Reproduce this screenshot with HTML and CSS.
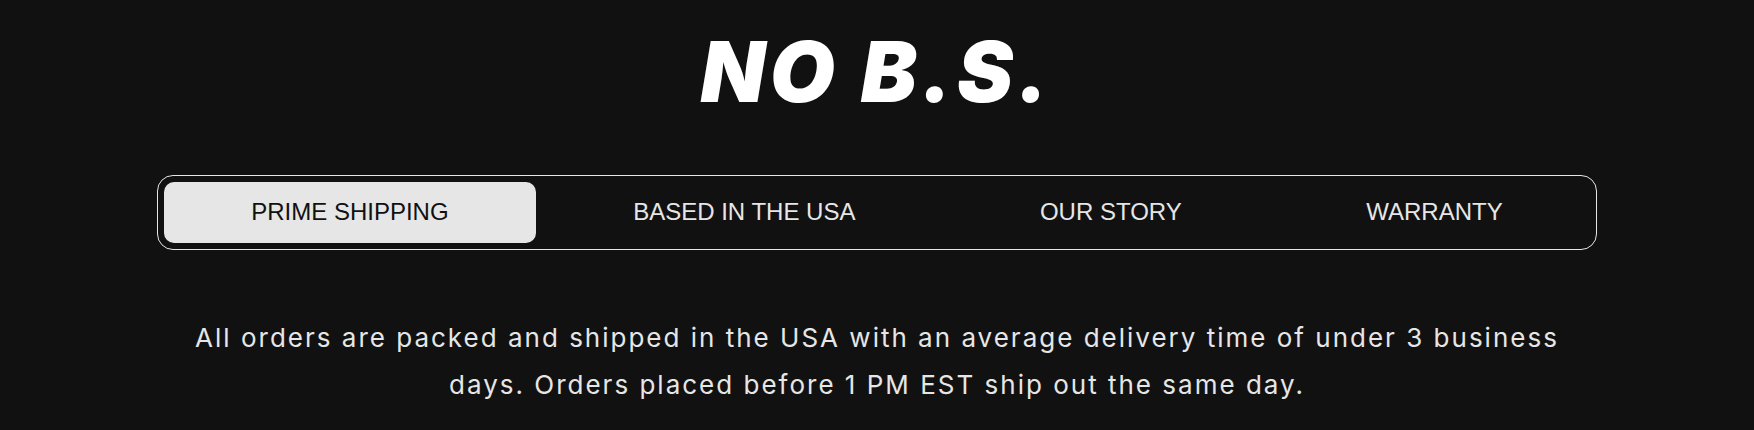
FILE: index.html
```html
<!DOCTYPE html>
<html lang="en">
<head>
<meta charset="utf-8">
<title>NO B.S.</title>
<link rel="stylesheet" href="styles.css">
</head>
<body>
<section class="nobs">
  <h1 class="nobs-title">NO B.S.</h1>
  <div class="tabs">
    <button class="tab tab-active">PRIME SHIPPING</button>
    <button class="tab">BASED IN THE USA</button>
    <button class="tab">OUR STORY</button>
    <button class="tab">WARRANTY</button>
  </div>
  <p class="nobs-text">All orders are packed and shipped in the USA with an average delivery time of under 3 business days. Orders placed before 1 PM EST ship out the same day.</p>
</section>
</body>
</html>
```
FILE: styles.css
```css
html, body {
  margin: 0;
  padding: 0;
  background: #111111;
}
body {
  width: 1754px;
  height: 430px;
  overflow: hidden;
}
.nobs {
  padding-top: 30px;
  display: flex;
  flex-direction: column;
  align-items: center;
}
.nobs-title {
  margin: 0;
  font-family: Inter, "Noto Sans", sans-serif;
  font-weight: 900;
  font-style: italic;
  font-size: 84px;
  line-height: 84px;
  letter-spacing: 4.5px;
  color: #ffffff;
  text-align: center;
}
.tabs {
  margin-top: 61px;
  box-sizing: border-box;
  width: 1440px;
  height: 75px;
  border: 1px solid #e6e6e6;
  border-radius: 16px;
  padding: 6px;
  display: flex;
  gap: 10px;
}
.tab {
  flex: 1 1 auto;
  border: 0;
  background: transparent;
  border-radius: 10px;
  padding: 0 0 2px;
  height: 61px;
  font-family: "Liberation Sans", Arial, sans-serif;
  font-size: 24px;
  line-height: 28px;
  color: #e6e6e6;
  text-align: center;
}
.tab-active {
  background: #e6e6e6;
  color: #111111;
}
.nobs-text {
  margin: 64px 0 0;
  width: 1400px;
  font-family: Inter, "Noto Sans", sans-serif;
  font-size: 26px;
  line-height: 47px;
  letter-spacing: 2px;
  color: #e6e6e6;
  text-align: center;
}
```
